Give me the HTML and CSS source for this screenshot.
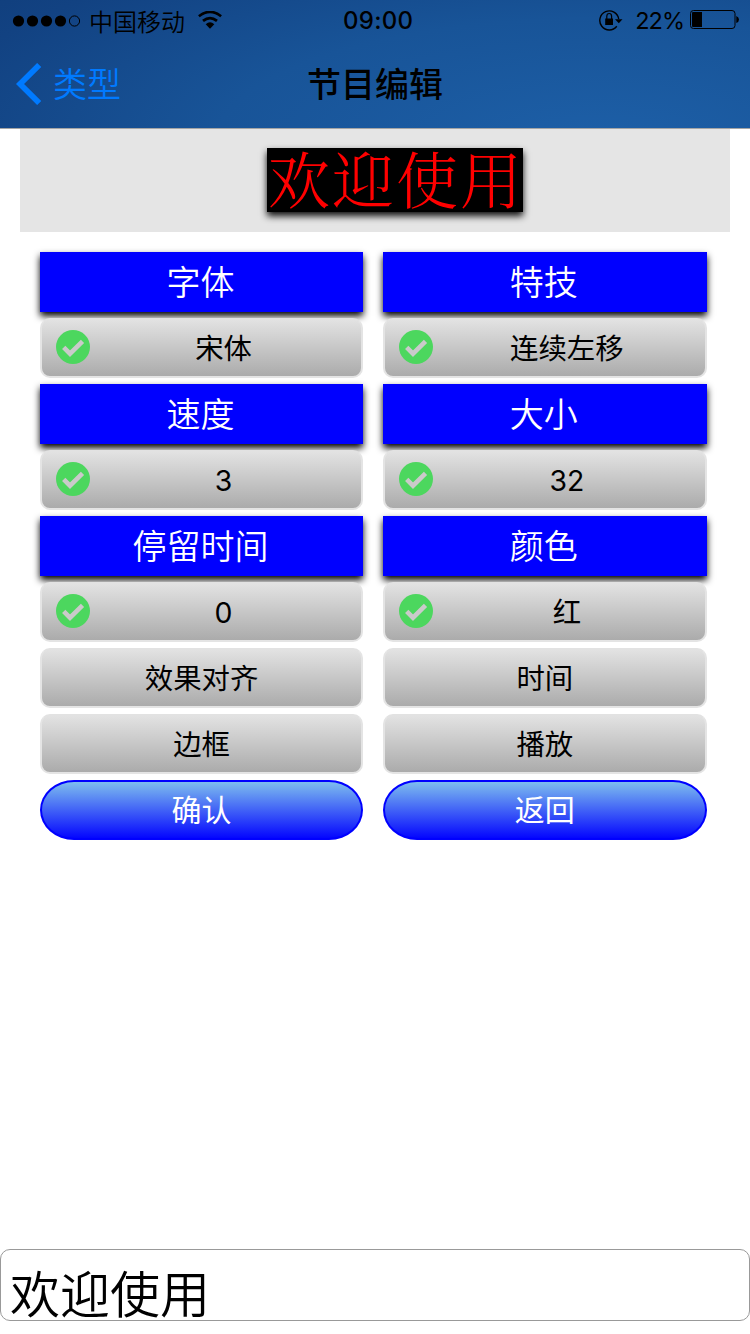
FILE: index.html
```html
<!DOCTYPE html>
<html lang="zh-CN">
<head>
<meta charset="utf-8">
<title>节目编辑</title>
<link rel="stylesheet" href="styles.css">
</head>
<body>
<svg class="defs" width="0" height="0">
  <symbol id="check" viewBox="0 0 34 34">
    <circle cx="17" cy="17" r="17" fill="#4cd75e"/>
    <path d="M7.7 17.3 14 23.7 26.5 11.3" fill="none" stroke="#cacaca" stroke-width="4.6"/>
  </symbol>
</svg>
<div class="screen">
  <header class="header">
    <div class="status">
      <svg class="signal" width="69" height="12" viewBox="0 0 69 12">
        <circle cx="6.5" cy="6" r="5.6"/><circle cx="20.5" cy="6" r="5.6"/><circle cx="34.5" cy="6" r="5.6"/><circle cx="48.5" cy="6" r="5.6"/>
        <circle cx="62.5" cy="6" r="5.1" fill="none" stroke="#000"/>
      </svg>
      <span class="carrier">中国移动</span>
      <svg class="wifi" width="24" height="18" viewBox="0 0 24 18">
        <path d="M.9 5.2Q12-3.4 23.1 5.2M5 9.9Q12 4.2 19 9.9" fill="none" stroke="#000" stroke-width="2.7"/>
        <path d="M7.7 13.2Q12 9.5 16.3 13.2L12 17.7Z"/>
      </svg>
      <span class="clock">09:00</span>
      <div class="status-right">
        <svg width="24" height="22" viewBox="0 0 24 22">
          <path d="M17.8 17.3A9.5 9.5 0 1 1 19.7 10" fill="none" stroke="#000" stroke-width="1.4"/>
          <path d="M16 10.3H23.5L19.8 14.2ZM6.2 9.4H14V16H6.2Z"/>
          <path d="M7.8 10V7.3a2.4 2.8 0 0 1 4.8 0V10" fill="none" stroke="#000" stroke-width="1.2"/>
        </svg>
        <span class="percent">22%</span>
        <svg class="battery" width="50" height="20" viewBox="0 0 50 20">
          <rect x=".5" y=".5" width="44.5" height="18" rx="3" fill="none" stroke="#000"/>
          <path d="M3 2H12V17H3Q2 17 2 16V3Q2 2 3 2ZM46.3 6Q49 7 49 9.5T46.3 13Z"/>
        </svg>
      </div>
    </div>
    <nav class="nav">
      <a class="back">
        <svg width="26" height="42" viewBox="0 0 26 42"><path d="M23.2 2 4 21 23.2 40" fill="none" stroke="#007aff" stroke-width="5.8"/></svg>
        <span>类型</span>
      </a>
      <h1 class="title">节目编辑</h1>
    </nav>
  </header>
  <section class="preview"><div class="led">欢迎使用</div></section>
  <main class="grid">
    <div class="label">字体</div><div class="label">特技</div>
    <div class="option checked"><svg class="tick"><use href="#check"/></svg><span>宋体</span></div>
    <div class="option checked"><svg class="tick"><use href="#check"/></svg><span>连续左移</span></div>
    <div class="label">速度</div><div class="label">大小</div>
    <div class="option checked"><svg class="tick"><use href="#check"/></svg><span>3</span></div>
    <div class="option checked"><svg class="tick"><use href="#check"/></svg><span>32</span></div>
    <div class="label">停留时间</div><div class="label">颜色</div>
    <div class="option checked"><svg class="tick"><use href="#check"/></svg><span>0</span></div>
    <div class="option checked"><svg class="tick"><use href="#check"/></svg><span>红</span></div>
    <div class="option"><span>效果对齐</span></div><div class="option"><span>时间</span></div>
    <div class="option"><span>边框</span></div><div class="option"><span>播放</span></div>
    <div class="action">确认</div><div class="action">返回</div>
  </main>
  <div class="message">欢迎使用</div>
</div>
</body>
</html>
```
FILE: styles.css
```css
* { box-sizing: border-box; }
body { margin: 0; background: #fff; color: #000; font-family: Inter, "Noto Sans CJK SC", sans-serif; }
.defs { display: block; height: 0; }
.screen { width: 750px; height: 1334px; display: flex; flex-direction: column; }
.header {
  height: 129px;
  flex: none;
  border-bottom: 1px solid #a5a5a5;
  background: radial-gradient(ellipse 850px 270px at 600px 140px, #1d5fa7 0%, #185498 45%, #124282 80%, #0f3c79 100%);
}
.status { height: 40px; display: grid; grid-template-columns: 89px 109px 145px 1fr auto; align-items: center; padding-right: 10px; }
.signal { margin-left: 12px; }
.carrier { font-size: 24px; line-height: 38px; font-weight: 350; font-family: "Noto Sans CJK SC", sans-serif; }
.wifi { margin-top: -2px; }
.clock { font-size: 24px; line-height: 40px; font-weight: 500; letter-spacing: .3px; }
.status-right { display: flex; align-items: center; margin-top: -1px; }
.percent { font-size: 23.5px; line-height: 40px; letter-spacing: -1px; padding-top: 2px; margin: 0 6px 0 12px; }
.battery { display: block; }
.nav { height: 88px; display: grid; grid-template-columns: 1fr auto 1fr; align-items: center; }
.back { display: flex; align-items: center; gap: 11px; padding-left: 16px; color: #007aff; font-size: 34px; line-height: 48px; font-weight: 350; }
.back span { padding-top: 2px; }
.title { margin: 0; padding-top: 1px; font-size: 34px; line-height: 48px; font-weight: 500; }
.preview { flex: none; height: 103px; margin: 0 20px; padding: 19px 0 0 247px; background: #e5e5e5; }
.led {
  width: 256px;
  height: 64px;
  padding-left: 1px;
  background: #000;
  color: #f00;
  font: 350 62px/60px "Noto Serif CJK SC", "Noto Sans CJK SC", serif;
  letter-spacing: 2px;
  white-space: nowrap;
  box-shadow: 0 4px 7px rgba(0, 0, 0, .95);
}
.grid { display: grid; grid-template-columns: 323.5px 323.5px; column-gap: 19.8px; grid-auto-rows: 60px; row-gap: 6px; padding: 20px 0 0 39.8px; }
.label {
  background: #00f;
  color: #fff;
  font-size: 34px;
  line-height: 60px;
  font-weight: 350;
  text-align: center;
  padding: 1px 2px 0 0;
  box-shadow: 0 4px 7px #000;
}
.option {
  position: relative;
  display: flex;
  align-items: center;
  justify-content: center;
  border: 2px solid #e4e4e4;
  border-top-color: #e2e2e2;
  border-radius: 10px;
  background: linear-gradient(#e2e2e2, #ababab);
  font-size: 28.4px;
  line-height: 56px;
}
.option span { padding-top: 2px; }
.checked { justify-content: flex-start; padding-left: 14px; }
.checked span { flex: 1; text-align: center; padding-right: 4px; }
.tick { width: 34px; height: 34px; flex: none; margin-top: -2px; }
.action {
  border: 2px solid #00f;
  border-radius: 34px / 30px;
  background: linear-gradient(#82c4ee, #00f);
  background-origin: border-box;
  color: #fff;
  font-size: 30px;
  line-height: 56px;
  text-align: center;
}
.message {
  height: 72px;
  margin-top: auto;
  margin-bottom: 13px;
  flex: none;
  border: 1px solid #999;
  border-radius: 10px;
  padding: 20px 0 0 9px;
  font-size: 50px;
  line-height: 50px;
  font-weight: 350;
}
```
